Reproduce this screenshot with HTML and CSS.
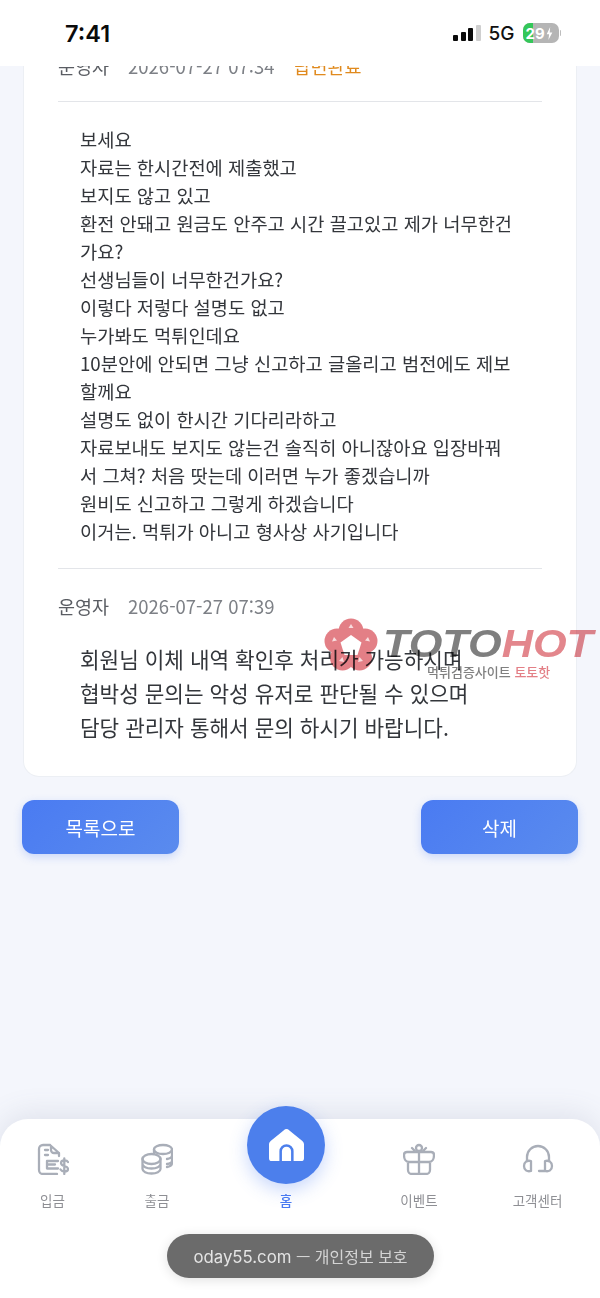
FILE: index.html
```html
<!DOCTYPE html>
<html lang="ko">
<head>
  <meta charset="UTF-8" />
  <meta name="viewport" content="width=device-width, initial-scale=1.0"/>
  <title>문의 상세</title>
  <link rel="stylesheet" href="styles.css">
</head>
<body>
  <div class="page">
    <header class="status-bar">
      <span class="clock">7:41</span>
      <div class="status-right">
        <span class="signal"><i class="s1"></i><i class="s2"></i><i class="s3"></i><i class="s4"></i></span>
        <span class="net">5G</span>
        <span class="battery-wrap">
          <span class="battery"><span class="battery-fill"></span><span class="battery-num">29</span><svg class="bolt" viewBox="0 0 6 12"><path d="M3.600 0 .4 6.800h2.200L2 12l3.600-7H3.200z"/></svg></span>
          <span class="battery-nub"></span>
        </span>
      </div>
    </header>

    <main class="content">
      <section class="card">
        <div class="meta meta-first">
          <span class="author">운영자</span>
          <span class="date">2026-07-27 07:34</span>
          <span class="state">답변완료</span>
        </div>
        <div class="rule"></div>
        <p class="question">보세요<br>자료는 한시간전에 제출했고<br>보지도 않고 있고<br>환전 안돼고 원금도 안주고 시간 끌고있고 제가 너무한건<br>가요?<br>선생님들이 너무한건가요?<br>이렇다 저렇다 설명도 없고<br>누가봐도 먹튀인데요<br>10분안에 안되면 그냥 신고하고 글올리고 범전에도 제보<br>할께요<br>설명도 없이 한시간 기다리라하고<br>자료보내도 보지도 않는건 솔직히 아니잖아요 입장바꿔<br>서 그쳐? 처음 땃는데 이러면 누가 좋겠습니까<br>원비도 신고하고 그렇게 하겠습니다<br>이거는. 먹튀가 아니고 형사상 사기입니다</p>
        <div class="rule"></div>
        <div class="meta">
          <span class="author">운영자</span>
          <span class="date">2026-07-27 07:39</span>
        </div>
        <p class="answer">회원님 이체 내역 확인후 처리가 가능하시며<br>협박성 문의는 악성 유저로 판단될 수 있으며<br>담당 관리자 통해서 문의 하시기 바랍니다.</p>

        <div class="watermark">
          <svg class="wm-logo" viewBox="0 0 54 54">
            <g class="wm-petals">
              <circle cx="27" cy="13" r="12.500"/>
              <circle cx="41" cy="23" r="12.500"/>
              <circle cx="35.500" cy="40" r="12.500"/>
              <circle cx="18.500" cy="40" r="12.500"/>
              <circle cx="13" cy="23" r="12.500"/>
            </g>
            <path class="wm-hole" d="M27 17l10.500 7.500-4 12.500h-13l-4-12.500z"/>
            <path class="wm-mark" d="M27 6l2.500 4h-5zM44 19l2 4.500-5-1zM39 43l-5 1 1.500-5zM15 43l3.500-4 1.500 5zM10 19l3 3.500-5 1z"/>
          </svg>
          <div class="wm-text">
            <div class="wm-name">TOTO<em>HOT</em></div>
            <div class="wm-sub">먹튀검증사이트 <em>토토핫</em></div>
          </div>
        </div>
      </section>

      <div class="actions">
        <button class="btn">목록으로</button>
        <button class="btn">삭제</button>
      </div>
    </main>

    <nav class="tabbar">
      <a class="tab">
        <svg class="tab-icon" viewBox="0 0 32 32"><path d="M13 2H6a4 4 0 0 0-4 4v21a4 4 0 0 0 4 4h14M13 2l9 8v3M14 3v4a3 3 0 0 0 3 3h5M8 7h3M8 12h3M21 18H10v7.500h11M10 21.500h8"/><path d="M31 19c-1-2-7-2.500-7 1 0 4 7 2 7 6 0 3.500-6 3-7.500.5M27.300 15.500V31"/></svg>
        <span class="tab-label">입금</span>
      </a>
      <a class="tab">
        <svg class="tab-icon" viewBox="0 0 32 32"><ellipse cx="22" cy="6.500" rx="9" ry="4.500"/><path d="M13 6.500V11M31 6.500V20c0 2-2 3.500-5 4M31 12.500c0 2-2 3-5 3.500M31 18c0 1.500-2 2.500-5 3"/><ellipse cx="10.500" cy="16" rx="9" ry="5"/><path d="M1.500 16v10c0 2.500 4 4.500 9 4.500s9-2 9-4.500V16M1.500 21c0 2.500 4 4.500 9 4.500s9-2 9-4.500"/></svg>
        <span class="tab-label">출금</span>
      </a>
      <a class="tab tab-home">
        <span class="home-circle">
          <svg class="home-icon" viewBox="0 0 36 36"><path class="home-body" d="M18 1c-1 0-2 .5-3 1.500L2 13c-1 1-2 2-2 4v14a3 3 0 0 0 3 3h30a3 3 0 0 0 3-3V17c0-2-1-3-2-4L21 2.500C20 1.500 19 1 18 1z"/><path class="home-door" d="M12 34V24a6 6 0 0 1 12 0v10"/></svg>
        </span>
        <span class="tab-label">홈</span>
      </a>
      <a class="tab">
        <svg class="tab-icon" viewBox="0 0 32 32"><path d="M4 9h24c2 0 3 1 3 3 0 4-2 7-5 7H6c-3 0-5-3-5-7 0-2 1-3 3-3zM5 19v8a4 4 0 0 0 4 4h14a4 4 0 0 0 4-4v-8M16 9v22M9 5l4 4M23 5l-4 4"/><circle cx="16" cy="5" r="3"/></svg>
        <span class="tab-label">이벤트</span>
      </a>
      <a class="tab">
        <svg class="tab-icon" viewBox="0 0 32 32"><path d="M5 18v-4a11 11 0 0 1 22 0v4"/><path d="M9 18c-4-1-7 1-7 5s3 6 7 5zM23 18c4-1 7 1 7 5s-3 6-7 5zM23 28h-6"/></svg>
        <span class="tab-label">고객센터</span>
      </a>
    </nav>

    <div class="url-pill"><span class="url-host">oday55.com</span> — 개인정보 보호</div>
  </div>
</body>
</html>
```

FILE: styles.css
```css
* { margin: 0; padding: 0; box-sizing: border-box; }
html, body {
  width: 600px;
  height: 1298px;
  overflow: hidden;
  font-family: 'Noto Sans CJK KR', 'Noto Sans', sans-serif;
  background-color: #f4f6fc;
}
.page {
  position: relative;
  width: 600px;
  height: 1298px;
  display: flex;
  flex-direction: column;
}

/* status bar */
.status-bar {
  height: 66px;
  flex-shrink: 0;
  background-color: #fff;
  display: flex;
  justify-content: space-between;
  align-items: center;
  padding: 0 39px 0 65px;
  position: relative;
  z-index: 2;
}
.clock {
  font-family: 'Inter', 'Liberation Sans', sans-serif;
  font-size: 23.500px;
  font-weight: 600;
  color: #0a0a0a;
}
.status-right { display: flex; align-items: center; gap: 8px; }
.signal { display: flex; align-items: flex-end; gap: 2.500px; height: 16px; }
.signal i { display: block; width: 5px; background-color: #0a0a0a; border-radius: 1px; }
.signal .s1 { height: 6px; }
.signal .s2 { height: 9px; }
.signal .s3 { height: 13px; }
.signal .s4 { height: 16px; background-color: #cfcfcf; }
.net {
  font-family: 'Inter', 'Liberation Sans', sans-serif;
  font-size: 19px;
  font-weight: 500;
  color: #111;
}
.battery-wrap { display: flex; align-items: center; gap: 1px; }
.battery {
  position: relative;
  width: 36px;
  height: 20px;
  border-radius: 7px;
  background-color: #b5b5b5;
  overflow: hidden;
  display: flex;
  align-items: center;
  padding-left: 3px;
}
.battery-nub { width: 1.500px; height: 6px; background-color: #bdbdbd; border-radius: 0 2px 2px 0; }
.battery-fill { position: absolute; left: 0; top: 0; bottom: 0; width: 10px; background-color: #34c759; }
.battery-num {
  position: relative;
  font-family: 'Inter', 'Liberation Sans', sans-serif;
  font-size: 15px;
  font-weight: 700;
  color: #fff;
}
.bolt { position: relative; width: 7px; height: 13px; fill: #fff; margin-left: 1px; }

/* card */
.content { padding: 0 22px; flex: 1; }
.card {
  display: flow-root;
  position: relative;
  margin: 0 1px;
  height: 711px;
  background-color: #fff;
  border: 1px solid #eceff4;
  border-top: none;
  border-radius: 0 0 16px 16px;
  padding: 0 34px;
}
.meta { display: flex; align-items: center; gap: 19px; font-size: 18.500px; line-height: 26px; white-space: nowrap; }
.meta-first { margin-top: -13px; margin-bottom: 22px; }
.author { color: #5a5d63; }
.date { color: #7d8086; }
.state { color: #e08a1e; }
.rule { height: 1px; background-color: #e3e5e9; }
.question {
  font-size: 18.700px;
  line-height: 28px;
  color: #33363b;
  padding: 23px 22px;
  white-space: nowrap;
}
.card > .rule + .meta { margin-top: 24px; }
.answer {
  font-size: 21.300px;
  line-height: 34px;
  color: #33363b;
  padding: 23px 22px 0;
  white-space: nowrap;
}

/* watermark over the answer */
.watermark {
  position: absolute;
  left: 300px;
  top: 552px;
  display: flex;
  gap: 5px;
  pointer-events: none;
  mix-blend-mode: multiply;
}
.wm-logo { width: 54px; height: 54px; flex-shrink: 0; }
.wm-petals { fill: #e37f86; }
.wm-hole { fill: #fff; }
.wm-mark { fill: #f8dcde; }
.wm-text { margin-top: 9px; }
.wm-name {
  font-family: 'Liberation Sans', sans-serif;
  font-size: 39px;
  line-height: 34px;
  font-weight: 700;
  font-style: italic;
  color: #7f7f7f;
  white-space: nowrap;
  transform: scaleX(1.110);
  transform-origin: left center;
}
.wm-name em { color: #e3868c; }
.wm-sub {
  font-size: 13px;
  line-height: 20px;
  font-weight: 500;
  color: #808080;
  margin-left: 44px;
  margin-top: 1px;
  white-space: nowrap;
}
.wm-sub em { font-style: normal; color: #e37f86; }

/* buttons */
.actions { display: flex; justify-content: space-between; margin-top: 23px; }
.btn {
  width: 157px;
  height: 54px;
  border: none;
  border-radius: 12px;
  background: linear-gradient(135deg, #4a7bf2, #5a8bee);
  color: #fff;
  font-family: inherit;
  font-size: 19px;
  box-shadow: 0 3px 8px rgba(74, 123, 242, .25);
}

/* bottom nav */
.tabbar {
  position: absolute;
  left: 0;
  right: 0;
  bottom: 0;
  height: 179px;
  background-color: #fff;
  border-radius: 28px 28px 0 0;
  box-shadow: 0 -4px 30px rgba(90, 100, 130, .14);
  display: grid;
  grid-template-columns: 105px 104px 154px 112px 125px;
}
.tab { display: flex; flex-direction: column; align-items: center; padding-top: 24px; }
.tab-icon {
  width: 32px;
  height: 32px;
  fill: none;
  stroke: #a9aeb8;
  stroke-width: 2.300;
  stroke-linecap: round;
  stroke-linejoin: round;
}
.tab-label { font-size: 13.500px; line-height: 20px; color: #8e8f94; margin-top: 15px; }
.tab-home { position: relative; }
.tab-home .tab-label { color: #4a7bf2; font-weight: 500; margin-top: 47px; }
.home-circle {
  position: absolute;
  top: -13px;
  left: 50%;
  transform: translateX(-50%);
  width: 78px;
  height: 78px;
  border-radius: 50%;
  background-color: #4c7fec;
  box-shadow: 0 6px 18px rgba(74, 123, 242, .3);
  display: flex;
  align-items: center;
  justify-content: center;
}
.home-icon { width: 35px; height: 35px; overflow: visible; }
.home-body { fill: #fff; }
.home-door { fill: none; stroke: #4c7fec; stroke-width: 2.600; }

/* browser url pill */
.url-pill {
  position: absolute;
  left: 167px;
  top: 1234px;
  width: 267px;
  height: 44px;
  border-radius: 22px;
  background-color: #6b6b6b;
  color: #d4d4d4;
  font-size: 16px;
  line-height: 44px;
  text-align: center;
  white-space: nowrap;
  box-shadow: 0 2px 12px rgba(0, 0, 0, .12);
}
.url-host { font-family: 'Inter', 'Liberation Sans', sans-serif; font-size: 16.800px; color: #e4e4e4; }
```
